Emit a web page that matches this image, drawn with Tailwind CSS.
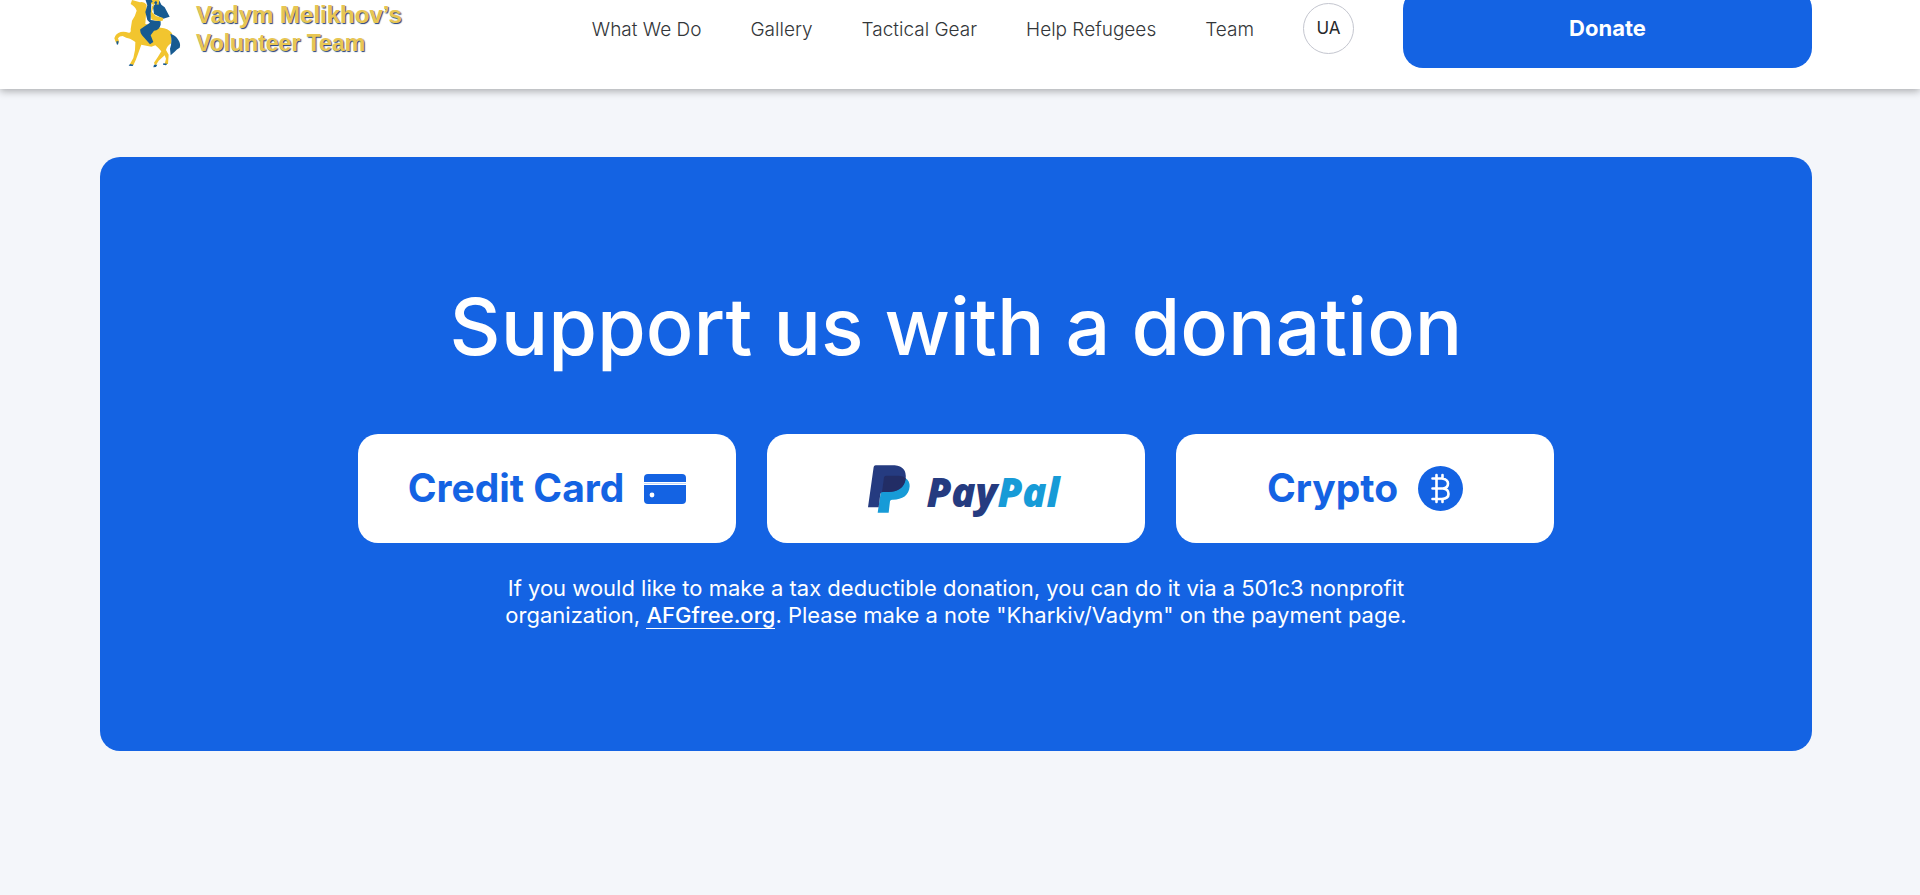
<!DOCTYPE html>
<html lang="en">
<head>
    <meta charset="UTF-8" />
    <meta name="viewport" content="width=device-width, initial-scale=1.0" />
    <title>Vadym Melikhov's Volunteer Team</title>
    <script src="https://cdn.jsdelivr.net/npm/@tailwindcss/browser@4"></script>
</head>
<body class="min-h-screen overflow-x-hidden bg-[#f4f6fa] font-['Inter','Liberation_Sans',sans-serif]">

<!-- Header, tucked slightly under the top edge -->
<header class="-mt-8 flex items-center gap-[49px] bg-white py-[21px] pr-[108px] pl-[100px] shadow-[0_2px_8px_rgba(0,0,0,0.32)]">
    <a href="#" class="mr-auto flex items-center gap-3 pl-3">
        <!-- Rider on horse -->
        <svg class="h-[79px] w-[72px] shrink-0" viewBox="20 -35 216 237" aria-hidden="true">
            <path fill="#f2c52f" d="M80 -2 L76 10 Q90 18 94 30 Q90 46 80 60 L76 86 Q78 97 70 96 Q58 92 46 94 Q31 98 27 113 L31 124 L38 130 L41 122 L38 113 Q42 106 52 106 Q62 112 74 114 Q82 118 90 124 L89 148 L84 172 L74 190 L84 194 Q92 178 98 160 L108 132 L138 138 L150 134 Q160 142 168 152 L158 168 L146 186 L150 196 L160 180 L178 164 L182 174 L178 190 L188 190 L190 162 L182 148 Q186 134 198 128 L200 98 Q188 82 166 81 L120 70 L124 12 Q116 2 104 5 Z"/>
            <path fill="#175a91" d="M120 -4 L126 14 L120 34 L126 58 L134 66 Q118 76 105 86 Q103 94 110 104 L134 131 L144 124 L136 104 L146 90 Q162 88 166 72 L166 62 L136 58 L138 10 L136 -8 Z"/>
            <path fill="#175a91" d="M160 -4 L168 12 L178 20 L193 48 L174 54 L146 40 L143 18 Z"/>
            <path fill="#f2c52f" d="M134 -12 L138 10 L146 14 L140 34 L152 46 L174 52 L172 60 Q152 64 138 56 L136 38 L140 16 L148 10 L160 12 L162 -6 Z"/>
            <path fill="#175a91" d="M130 -6 L138 6 L142 3 L135 -8 Z M146 6 L152 12 L156 6 L152 0 Z"/>
            <path fill="#175a91" d="M195 99 Q211 103 219 118 Q227 130 223 141 Q214 145 208 153 L196 164 L194 144 Q202 122 195 99 Z"/>
            <path fill="#175a91" d="M33 122 L40 122 L38 132 L34 131 Z M74 190 L84 192 L82 196 L70 195 Z M146 192 L156 192 L152 199 L144 200 Z M174 188 L186 189 L182 194 L173 192 Z"/>
        </svg>
        <span class="font-['Liberation_Sans',Arial,sans-serif] text-2xl leading-7 font-bold text-[#e8c653] [text-shadow:1px_1px_1px_#1f3f78]">Vadym Melikhov’s<br><span class="text-[23px]">Volunteer Team</span></span>
    </a>

    <nav class="flex items-center gap-[49px] pt-1 text-[19px] font-light whitespace-nowrap text-[#333639]">
        <a href="#">What We Do</a>
        <a href="#">Gallery</a>
        <a href="#">Tactical Gear</a>
        <a href="#">Help Refugees</a>
        <a href="#">Team</a>
    </nav>

    <button type="button" class="size-[51px] shrink-0 rounded-full border border-[#c4c6cf] pt-px text-[17px] text-[#26282b]">UA</button>
    <a href="#donate" class="flex h-[79px] w-[409px] items-center justify-center rounded-[20px] bg-[#1463e3] text-[22px] font-bold text-white">Donate</a>
</header>

<!-- Donation block -->
<main class="pt-[68px] pr-[108px] pb-36 pl-[100px]">
    <section id="donate" class="flex flex-col items-center rounded-[20px] bg-[#1463e3] pt-[121px] pb-[122px] text-white">
        <h1 class="text-[79px] leading-[97px] font-medium">Support us with a donation</h1>

        <div class="mt-[59px] flex gap-[31px]">
            <button type="button" class="flex h-[109px] w-[378px] items-center justify-center gap-5 rounded-[20px] bg-white text-[39px] font-bold text-[#1463e3]">
                Credit Card
                <svg class="h-[30px] w-[42px]" viewBox="0 0 42 30" aria-hidden="true">
                    <path fill="#1463e3" d="M4 0 H38 Q42 0 42 4 V8 H0 V4 Q0 0 4 0 Z"/>
                    <path fill="#1463e3" opacity=".25" d="M0 9 H42 V10 H0 Z"/>
                    <path fill="#1463e3" d="M0 11 H42 V26 Q42 30 38 30 H4 Q0 30 0 26 Z"/>
                    <circle cx="8" cy="21" r="2.4" fill="#fff"/>
                </svg>
            </button>

            <button type="button" aria-label="PayPal" class="flex h-[109px] w-[378px] items-center justify-center gap-4 rounded-[20px] bg-white pl-4">
                <svg class="h-[48px] w-[42px]" viewBox="355 136 126 144" aria-hidden="true">
                    <path fill="#179bd7" d="M468 176 Q480 184 480 200 C478 228 458 240 430 240 H427 Q422 240 421 245 L417 279 H384 L396 200 Z"/>
                    <path fill="#253b80" d="M372 142 Q373 137 378 137 H435 Q472 140 468 178 C464 206 442 217 415 217 H400 Q393 217 392 223 L387 263 H355 Z"/>
                    <path fill="#222d65" d="M403 173 Q404 168 409 168 H448 Q462 169 468 176 C465 206 442 217 415 217 H397 Z"/>
                </svg>
                <span class="pt-1.5 font-['Open_Sans',sans-serif] text-[40px] leading-[48px] font-extrabold text-[#253b80] italic">Pay<span class="text-[#179bd7]">Pal</span></span>
            </button>

            <button type="button" class="flex h-[109px] w-[378px] items-center justify-center gap-5 rounded-[20px] bg-white text-[39px] font-bold text-[#1463e3]">
                Crypto
                <svg class="size-[45px]" viewBox="0 0 45 45" fill="none" aria-hidden="true">
                    <circle cx="22.5" cy="22.5" r="22.5" fill="#1463e3"/>
                    <path stroke="#fff" stroke-width="2.6" stroke-linecap="round" stroke-linejoin="round" d="M14.500 12.500 H24 Q30 13.500 30 17.500 Q30 22 25 22.500 Q30.500 23 30.500 28 Q30.500 32.500 24 33 H14.500 M14.500 22.500 H25 M18.500 9 V36 M24.500 9 V12.500 M24.500 33 V36"/>
                </svg>
            </button>
        </div>

        <p class="mt-[32px] text-center text-[22px] leading-[27px]">
            If you would like to make a tax deductible donation, you can do it via a 501c3 nonprofit<br>
            organization, <a href="#" class="border-b border-white font-medium">AFGfree.org</a>. Please make a note "Kharkiv/Vadym" on the payment page.
        </p>
    </section>
</main>

</body>
</html>
